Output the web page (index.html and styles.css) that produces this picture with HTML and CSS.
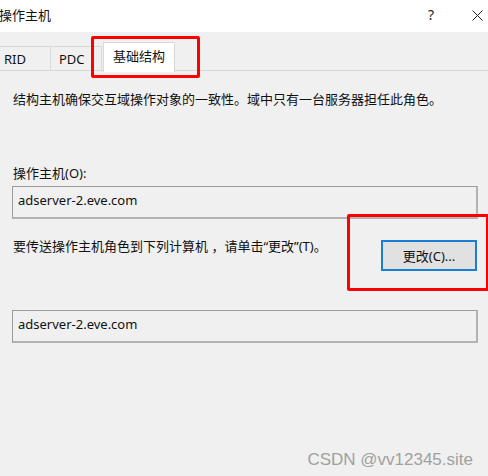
FILE: index.html
```html
<!DOCTYPE html>
<html lang="zh-CN">
<head>
<meta charset="utf-8">
<title>操作主机</title>
<link rel="stylesheet" href="styles.css">
</head>
<body>
<div class="window">
  <div class="titlebar">
    <span class="title">操作主机</span>
    <div class="controls">
      <span class="help">?</span>
      <svg class="close" width="11" height="11" viewBox="0 0 11 11"><path d="M0.5 0.5 L10.5 10.5 M10.5 0.5 L0.5 10.5" stroke="#222" stroke-width="1" fill="none"/></svg>
    </div>
  </div>
  <div class="tabs">
    <div class="tab tab-rid">RID</div>
    <div class="tab tab-pdc">PDC</div>
    <div class="tab tab-active">基础结构</div>
  </div>
  <div class="panel">
    <p class="desc">结构主机确保交互域操作对象的一致性。域中只有一台服务器担任此角色。</p>
    <p class="label">操作主机(O):</p>
    <div class="field">adserver-2.eve.com</div>
    <div class="row">
      <p class="hint">要传送操作主机角色到下列计算机 ，请单击“更改”(T)。</p>
      <button class="btn">更改(C)...</button>
    </div>
    <div class="field field2">adserver-2.eve.com</div>
  </div>
  <div class="mark mark-tab"></div>
  <div class="mark mark-btn"></div>
  <div class="watermark">CSDN @vv12345.site</div>
</div>
</body>
</html>
```
FILE: styles.css
```css
html, body {
  margin: 0;
  padding: 0;
}
body {
  width: 488px;
  height: 476px;
  overflow: hidden;
  background: #f0f0f0;
  font-family: "Noto Sans", "Noto Sans CJK SC", sans-serif;
  font-size: 13px;
  color: #111;
}
.window {
  position: relative;
  width: 488px;
  height: 476px;
}
.titlebar {
  height: 32px;
  background: #ffffff;
  display: flex;
  align-items: center;
  justify-content: space-between;
}
.title {
  margin-left: -1px;
  line-height: 18px;
  margin-top: -2px;
}
.controls {
  display: flex;
  align-items: center;
  margin-top: -2px;
}
.help {
  font-size: 14px;
  line-height: 18px;
  color: #222;
  margin-right: 38px;
}
.close {
  display: block;
  margin-right: 5px;
}
.tabs {
  height: 38px;
  border-bottom: 1px solid #d9d9d9;
  display: flex;
  align-items: flex-end;
}
.tab {
  height: 24px;
  line-height: 24px;
  box-sizing: border-box;
  border: 1px solid #d9d9d9;
  border-bottom: none;
  background: #f0f0f0;
  color: #111;
}
.tab-rid {
  margin-left: -2px;
  width: 53px;
  padding-left: 5px;
}
.tab-pdc {
  width: 51px;
  padding-left: 8px;
  border-left: none;
}
.tab-active {
  height: 30px;
  line-height: 26px;
  width: 72px;
  padding-left: 9px;
  margin-left: 1px;
  margin-bottom: -2px;
  background: #ffffff;
  position: relative;
}
.panel {
  padding: 0 10px 0 12px;
}
.desc {
  margin: 19px 0 0 1px;
  line-height: 18px;
}
.label {
  margin: 56px 0 0 1px;
  line-height: 18px;
}
.field {
  margin-top: 4px;
  height: 33px;
  box-sizing: border-box;
  border: 1px solid #9c9c9c;
  border-right: 2px solid #b3b3b3;
  border-bottom: 2px solid #b3b3b3;
  padding: 4px 0 0 5px;
  line-height: 18px;
}
.row {
  margin-top: 18px;
  display: flex;
  justify-content: space-between;
  align-items: flex-start;
}
.hint {
  margin: 0 0 0 1px;
  line-height: 18px;
}
.btn {
  margin-top: 3px;
  width: 96px;
  height: 31px;
  box-sizing: border-box;
  border: 2px solid #1a7fd4;
  background: #e1e1e1;
  font-family: "Noto Sans", "Noto Sans CJK SC", sans-serif;
  font-size: 13px;
  color: #111;
  padding: 0;
  margin-right: 1px;
}
.field2 {
  margin-top: 39px;
}
.mark {
  position: absolute;
  border: 3px solid #ff0000;
  box-sizing: border-box;
  border-radius: 2px;
}
.mark-tab {
  left: 91px;
  top: 36px;
  width: 109px;
  height: 42px;
}
.mark-btn {
  left: 347px;
  top: 214px;
  width: 142px;
  height: 77px;
}
.watermark {
  position: absolute;
  right: 15px;
  top: 450px;
  font-family: "Liberation Sans", Arial, sans-serif;
  font-size: 17px;
  line-height: 20px;
  color: #a0a0a0;
}
```
